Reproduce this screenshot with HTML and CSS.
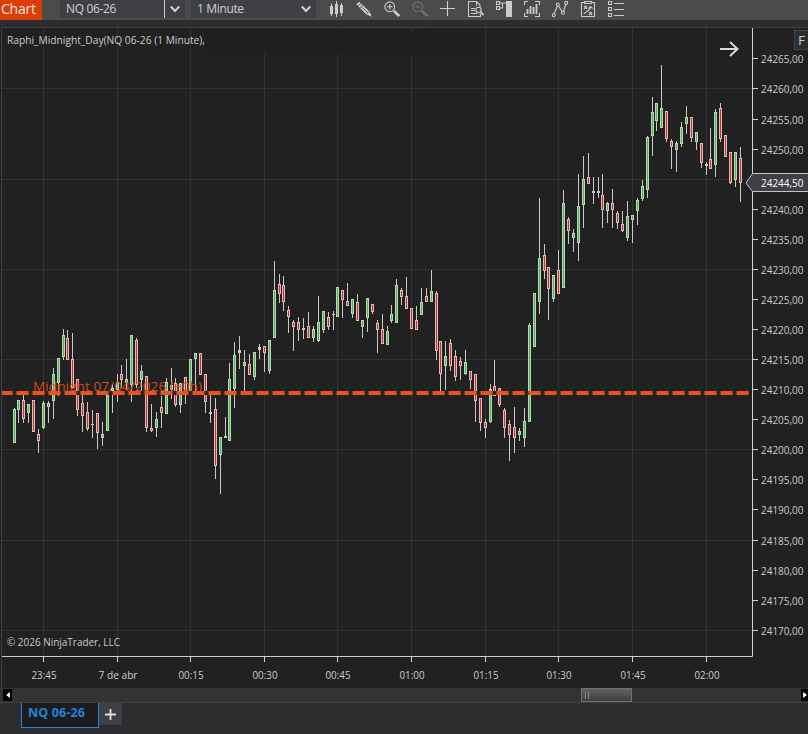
FILE: index.html
```html
<!DOCTYPE html>
<html lang="en">
<head>
<meta charset="utf-8">
<title>Chart</title>
<link rel="stylesheet" href="styles.css">
</head>
<body>
<div class="window">
  <header class="toolbar">
    <div class="title"><span>Chart</span></div>
    <div class="select instrument">
      <span class="value">NQ 06-26</span>
      <span class="caret"><svg width="12" height="8" viewBox="0 0 12 8"><path d="M1.800 1.500 6 6l4.200-4.500"/></svg></span>
    </div>
    <div class="select interval">
      <span class="value">1 Minute</span>
      <span class="caret"><svg width="12" height="8" viewBox="0 0 12 8"><path d="M1.800 1.500 6 6l4.200-4.500"/></svg></span>
    </div>
    <nav class="icons">
      <svg viewBox="0 0 16 16"><g class="solid"><path d="M2 5h3v8H2zM7 3h3v10H7zM12 4h3v8h-3z"/><path d="M3 2.500h1V15H3zM8 0h1v16H8zM13 2h1v13h-1z"/></g></svg>
      <svg viewBox="0 0 16 16"><g class="solid"><path d="M.3 3.300 3.300.8l10.200 9.600 2.300 5.400-5.400-2.300z"/></g><path class="cut" d="M1.800 5.300 5.300 2M3.500 7.200 7.200 3.700M5.300 5.500l6.700 6.400M10.500 13l2.700-2.700"/></svg>
      <svg viewBox="0 0 16 16"><circle cx="5.800" cy="5.800" r="4.900"/><path d="M3 5.800h5.600M5.800 3v5.600"/><path class="thick" d="m10 10 5.200 5"/></svg>
      <svg class="off" viewBox="0 0 16 16"><circle cx="5.800" cy="5.800" r="4.900"/><path d="M3 5.800h5.600"/><path class="thick" d="m10 10 5.200 5"/></svg>
      <svg viewBox="0 0 16 16"><path d="M0 7.500h15M7.500 0v15"/></svg>
      <svg viewBox="0 0 16 16"><path d="M12.500 13v2.500H.500V.500h8l3.500 3.500v2M8.500.5v4M3 7.500h4M3 9.500h4M3 12.500h6"/><circle cx="10.500" cy="9" r="2.700"/><path class="mid" d="m12.500 11 3 3"/></svg>
      <svg viewBox="0 0 16 16"><path class="solid" d="M10 0h6v16h-6z"/><path d="M.5.5h3v3h-3zM.5 5.500h3v3h-3zM3.500 2h6.500M3.500 7h3V2"/></svg>
      <svg viewBox="0 0 16 16"><path d="M.5 4V.5H4M11 .5h4.500V4M.5 12v3.500H4M15.500 12v3.500H11"/><path class="mid" d="M3.500 8v5M6.500 5v8M9.500 6v7M12.500 3v10"/></svg>
      <svg viewBox="0 0 16 16"><path d="M2.200 12.500 5.500 5M6.500 5l4 6M11.500 10.500l2.300-7.500"/><circle cx="1.800" cy="14" r="1.500"/><circle cx="5.800" cy="3.500" r="1.500"/><circle cx="11" cy="11.800" r="1.500"/><circle cx="14.200" cy="1.900" r="1.500"/></svg>
      <svg viewBox="0 0 16 16"><path d="M4 1.500H1.500v14h13v-14H12M4.500.5h7v2h-7z"/><path d="m4 5 3 3M7 5 4 8M9 11l3 3M12 11l-3 3M4 13c1-3 4-1 6-6M8.500 7.500l2-2 2 2"/></svg>
      <svg viewBox="0 0 16 16"><path d="M.5.5h3v3h-3zM.5 6.500h3v3h-3zM.5 12.500h3v3h-3zM6 2.500h10M6 8.500h10M6 14.500h10"/></svg>
    </nav>
  </header>
  <main class="panel">
    <svg class="chart" id="chart" width="808" height="661" viewBox="0 27 808 661"></svg>
  </main>
  <div class="scrollbar">
    <span class="arrow left"><svg width="5" height="8" viewBox="0 0 5 8"><path d="M5 0v8L0 4z"/></svg></span>
    <span class="thumb"><i></i><i></i></span>
    <span class="arrow right"><svg width="5" height="8" viewBox="0 0 5 8"><path d="M0 0v8l5-4z"/></svg></span>
  </div>
  <footer class="tabs">
    <div class="tab">NQ 06-26</div>
    <div class="add"><svg width="11" height="11" viewBox="0 0 11 11"><path d="M0 5.500h11M5.500 0v11"/></svg></div>
  </footer>
</div>
<script src="chart.js"></script>
</body>
</html>
```
FILE: styles.css
```css
* { box-sizing: border-box; }
body {
  margin: 0;
  background: #2d2d30;
  font-family: "Open Sans", "Noto Sans", sans-serif;
  color: #d2d2d2;
}
.window { display: flex; flex-direction: column; width: 808px; height: 734px; overflow: hidden; background: #2d2d30; }

.toolbar { display: flex; height: 20px; flex: none; background: #4b4b4b; margin-bottom: 7px; }
.title { width: 42px; height: 20px; background: #dc3d05; color: #f5e8e2; font-size: 14px; line-height: 18px; padding-left: 1px; margin-right: 18px; white-space: nowrap; letter-spacing: -0.25px; }
.select { display: flex; width: 125px; height: 18px; background: #3f3f46; color: #d0d0d0; font-size: 12px; line-height: 17px; }
.instrument { margin-right: 6px; }
.value { flex: 1; padding-left: 6px; letter-spacing: -0.35px; white-space: nowrap; }
.instrument .value { border-right: 1px solid #c8c8c8; }
.caret { width: 20px; display: flex; align-items: center; justify-content: center; }
.caret path { fill: none; stroke: #d0d0d0; stroke-width: 2; }
.icons { display: flex; gap: 12px; padding: 1px 0 0 12px; }
.icons svg { width: 16px; height: 16px; fill: none; stroke: #cccccc; stroke-width: 1.1; }
.icons .solid { fill: #cccccc; stroke: none; }
.icons .thick { stroke-width: 2.6; }
.icons .mid { stroke-width: 1.8; }
.icons .cut { stroke: #4b4b4b; stroke-width: 0.9; }
.icons .off { stroke: #707070; }

.panel { height: 661px; flex: none; background: #212121; }
.chart { display: block; }
.chart text { fill: #cccccc; font-size: 11px; }
.grid { stroke: #323232; stroke-width: 1; }
.frame { stroke: #3f3f46; stroke-width: 1; fill: none; }
.axis { stroke: #d0d0d0; stroke-width: 1; fill: none; }
.smudge { fill: #1f1f1f; }
.chart .level-label { fill: #dc5018; fill-opacity: 0.95; font-size: 13.5px; }
.level-gap { stroke: #33231c; stroke-width: 4; }
.level { stroke: #e8531f; stroke-width: 4; stroke-dasharray: 12 4; stroke-dashoffset: 1.5; }
.wick { fill: #c9c9c9; }
.body-up { fill: #b9d8b7; }
.body-down { fill: #dfbcba; }
.core-up { fill: #5aad5c; }
.core-down { fill: #c23434; }
.arrow-next { fill: none; stroke: #d8d8d8; stroke-width: 2; }
.flag { fill: #3f3f46; stroke: #c4c4ca; stroke-width: 1; }
.fixed { fill: #2d2d30; stroke: #444449; }
.chart .flag-text { fill: #ffffff; }
.chart .fixed-text { font-size: 13px; }

.scrollbar { display: flex; align-items: center; height: 15px; flex: none; background: #333333; border-bottom: 1px solid #3f3f46; padding-left: 3px; }
.arrow { display: flex; align-items: center; justify-content: center; height: 12px; background: #000; }
.arrow path { fill: #fff; }
.arrow svg { width: 4px; height: 6px; }
.left { width: 9px; }
.right { width: 7px; margin-left: auto; }
.thumb { display: flex; gap: 2px; width: 51px; height: 14px; margin-left: 569px; padding: 3px 0 0 3px; border: 1px solid #707070; background: linear-gradient(#636363, #3e3e3e); }
.thumb i { width: 1px; height: 7px; background: #858585; }

.tabs { display: flex; height: 31px; padding-left: 21px; }
.tab { width: 78px; height: 25px; border: 1px solid #2085dc; border-top: 0; background: #1c1c1d; color: #2085dc; font-size: 12.5px; font-weight: 700; line-height: 20px; padding-left: 6px; letter-spacing: 0.15px; white-space: nowrap; }
.add { display: flex; align-items: center; justify-content: center; width: 23px; height: 22px; background: #3f3f46; }
.add path { stroke: #dedede; stroke-width: 1.8; }
```
FILE: chart.js
```js
// Each candle: high, body top, body bottom, low, direction (u = up, d = down, n = doji)
const candles = `408,409,443,443,u 400,400,410,423,u 395,400,419,423,d 404,404,413,423,u 400,400,432,432,d 429,434,441,453,d
401,403,428,429,u 401,403,407,423,u 368,374,401,419,u 358,358,383,396,u 329,335,357,360,u 330,338,360,360,d
333,359,388,388,d 379,379,410,416,d 395,403,416,432,d 402,412,429,431,d 410,424,425,438,n 413,413,433,449,d
422,434,438,446,u 393,395,431,431,u 384,388,391,413,u 374,382,390,402,u 365,374,380,388,d 359,379,383,390,u
335,335,385,402,u 338,340,385,388,d 365,371,380,394,u 376,376,428,432,d 404,428,431,432,d 412,419,428,437,u
396,407,413,428,d 378,382,414,414,u 368,385,390,399,u 378,383,405,407,d 383,383,405,413,u 377,377,395,404,d
359,359,392,392,u 353,353,359,392,u 353,353,375,375,d 374,374,402,413,d 395,412,414,423,n 398,409,466,479,d
437,437,455,494,u 417,436,438,438,n 363,379,441,441,u 342,355,389,408,u 336,350,353,369,n 350,362,366,392,u
354,364,375,375,d 352,352,377,380,u 344,347,350,359,n 346,346,353,372,d 340,340,371,374,u 261,290,338,338,u
274,284,294,303,d 276,285,302,311,d 306,310,317,333,d 320,322,327,351,d 317,322,330,341,d 318,328,330,339,n
312,326,338,338,d 326,329,338,342,u 296,322,341,342,u 311,311,330,333,u 312,317,327,330,d 311,314,315,330,n
287,287,317,317,u 290,290,300,318,d 283,301,306,306,d 299,299,314,318,u 294,302,321,321,d 320,320,327,338,u
298,298,318,332,u 304,304,312,314,d 320,323,330,353,d 314,329,344,344,d 326,331,345,345,u 305,314,321,323,u
279,285,323,323,u 288,290,297,305,d 277,296,309,309,d 308,308,329,329,d 306,320,330,330,d 288,302,315,315,u
288,296,302,302,d 270,291,302,302,u 291,293,351,360,d 341,341,374,391,d 341,356,366,390,u 339,343,366,371,d
350,356,377,381,d 357,361,366,380,d 350,362,374,375,u 371,371,380,389,d 374,374,401,422,d 398,398,423,431,d
419,422,428,438,d 384,389,422,423,u 360,386,396,396,d 388,388,405,407,d 408,410,428,438,d 420,424,435,461,d
407,427,438,453,d 428,431,435,441,u 408,421,438,447,u 323,325,422,422,u 293,293,347,347,u 198,258,302,314,u
244,255,271,279,d 267,267,289,320,d 275,275,299,302,u 250,270,294,294,d 190,203,288,288,u 217,219,231,244,d
229,233,238,252,u 174,206,243,261,u 156,179,205,228,u 153,177,184,184,d 177,191,193,204,n 177,191,193,198,n
174,195,210,228,d 202,203,211,223,u 189,203,210,228,d 211,213,223,229,d 211,224,231,232,d 201,216,238,241,u
215,215,220,243,u 198,200,211,225,u 180,186,199,201,u 136,137,190,198,u 97,112,136,156,u 103,103,121,131,u
65,108,128,128,u 111,111,139,142,d 139,141,147,169,d 141,143,150,172,u 122,127,144,147,u 106,117,124,134,u
117,117,138,142,d 132,132,142,150,u 143,143,163,168,d 162,164,166,175,n 128,159,169,169,d 109,112,165,177,u
103,108,139,142,d 135,135,157,157,d 152,152,183,184,d 152,152,180,187,u 147,158,183,202,d`
  .split(/\s+/).map(c => c.split(','));

const times = ['23:45', '7 de abr', '00:15', '00:30', '00:45', '01:00', '01:15', '01:30', '01:45', '02:00'];
const timeX = [43, 117, 190, 264, 337, 411, 485, 558, 632, 706];
const gridY = [88, 179, 269, 359, 449, 540, 630];

const text = (x, y, width, content, cls = '') =>
  `<text class="${cls}" x="${x}" y="${y}" textLength="${width}" lengthAdjust="spacingAndGlyphs">${content}</text>`;
const rect = (cls, x, y, w, h) => `<rect class="${cls}" x="${x}" y="${y}" width="${w}" height="${h}"/>`;

let out = '';
out += `<path class="grid" d="${timeX.map(x => `M${x + .5} 28V656`).join('')}${gridY.map(y => `M2 ${y + .5}H752`).join('')}"/>`;
out += '<path class="smudge" d="M205 31 300 29 470 33 Q485 38 483 53L400 55 205 53z"/>';
out += '<path class="frame" d="M1.500 688V27.500H808"/>';

candles.forEach(([h, t, b, l, dir], i) => {
  [h, t, b, l] = [h, t, b, l].map(Number);
  const x = Math.round(13.5 + 4.908 * i);
  out += rect('wick', x, h, 1, Math.max(l - h, 1));
  if (dir === 'n') {
    out += rect('wick', x - 1, t, 3, b - t);
  } else {
    const kind = dir === 'u' ? 'up' : 'down';
    out += rect('body-' + kind, x - 1, t, 3, b - t);
    out += rect('core-' + kind, x, t + 1, 1, Math.max(b - t - 2, 1));
  }
});

out += text(33, 391, 169, 'Midnight 07/04/2026 (+0h)', 'level-label');
out += '<path class="level-gap" d="M2 393H749"/><path class="level" d="M2 393H749"/>';

out += '<path class="axis" d="M2 656.500H752.500V28"/>';
out += `<path class="axis" d="${timeX.map(x => `M${x + .5} 657v5`).join('')}"/>`;
times.forEach((label, i) => {
  const width = label.length > 5 ? 39 : 25;
  out += text(timeX[i] + 1 - width / 2, 679, width, label);
});
for (let i = 0; i < 20; i++) {
  if (i === 4) continue;
  const y = Math.round(58.4 + i * 30.07);
  out += `<path class="axis" d="M753 ${y + .5}h5"/>`;
  out += text(761, y + 5, 42.5, (24265 - i * 5) + ',00');
}
out += '<path class="flag" d="M746 183 752.500 173.500H809V191.500H752.500z"/>';
out += text(761, 187, 42.5, '24244,50', 'flag-text');
out += rect('fixed', 794.5, 30.5, 20, 19) + text(798, 45, 7, 'F', 'fixed-text');
out += '<path class="arrow-next" d="M720 49H737M730 42l7.500 7-7.500 7"/>';
out += text(7, 44, 198, 'Raphi_Midnight_Day(NQ 06-26 (1 Minute),');
out += text(7, 646, 113, '© 2026 NinjaTrader, LLC');

document.getElementById('chart').innerHTML = out;
```
